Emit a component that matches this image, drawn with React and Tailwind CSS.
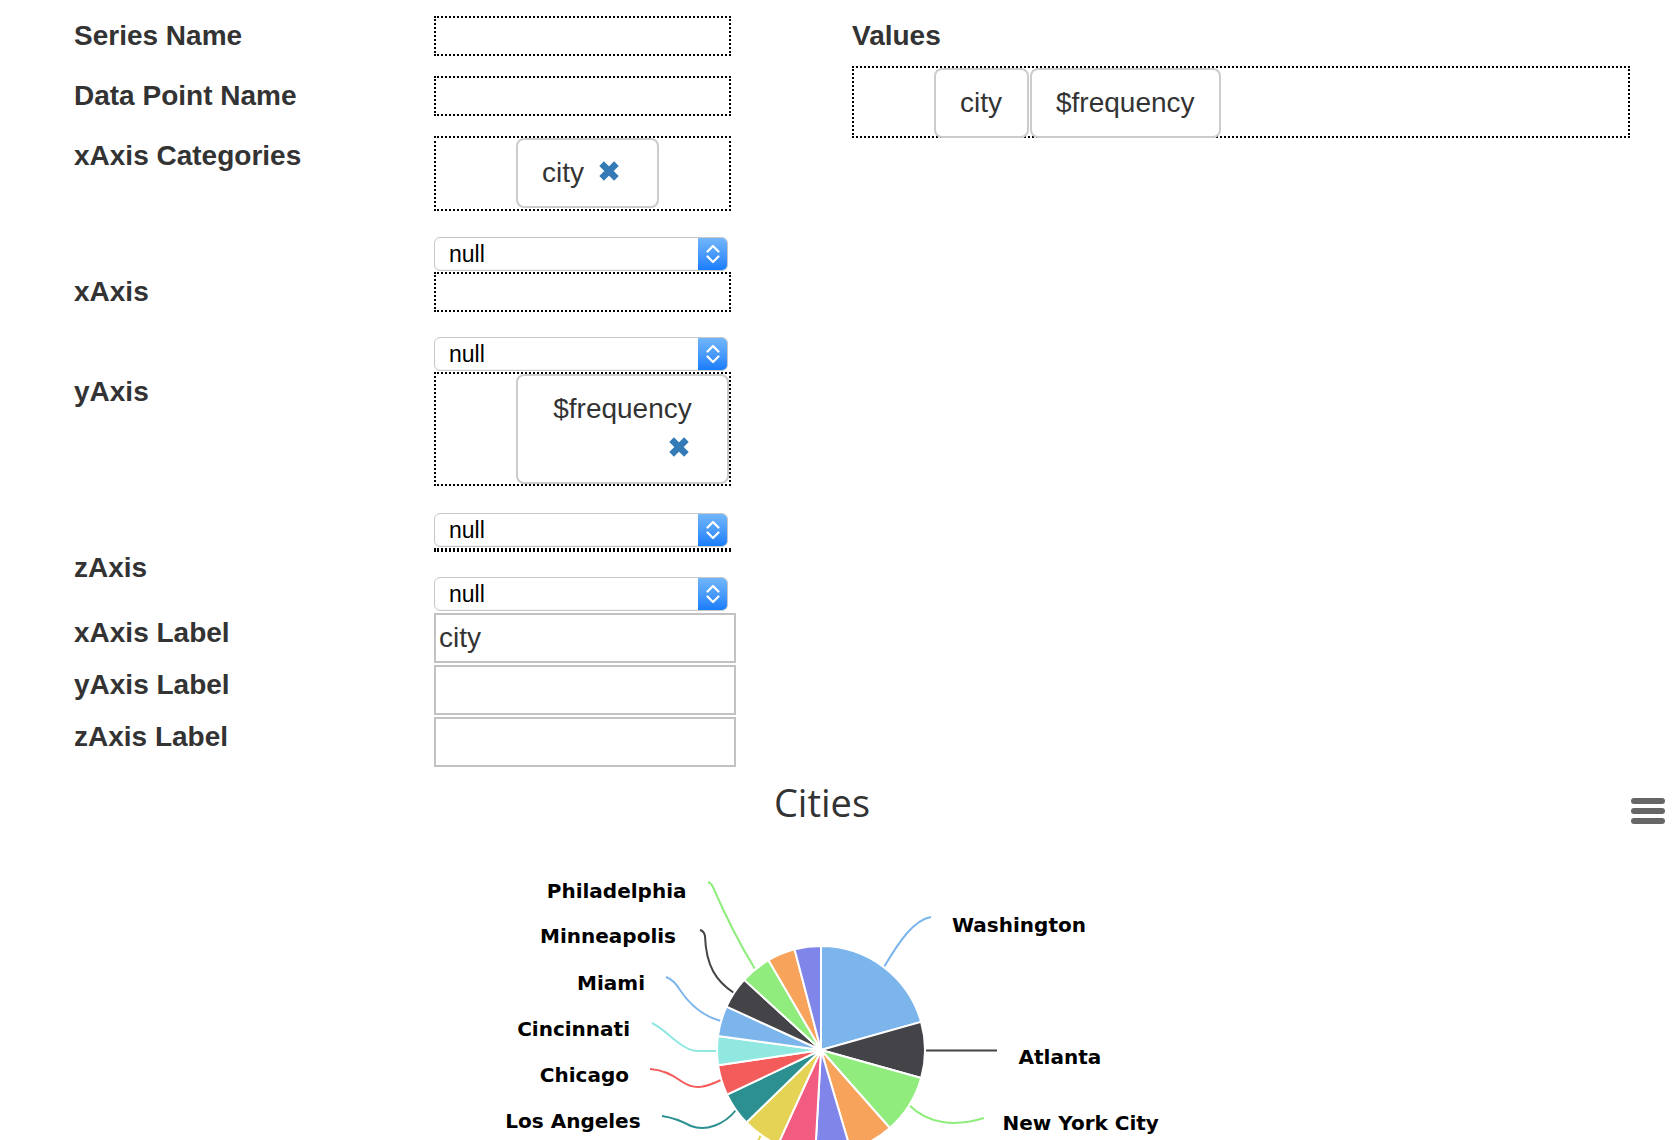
import React from "react";

const LABEL = "w-[360px] shrink-0 text-[28px] leading-[40px] font-bold text-[#333]";
const BOX = "w-[297px] border-2 border-dotted border-black";

function XIcon() {
  return (
    <span className="inline-flex w-[34px] shrink-0 items-center">
      <svg width="22" height="22" viewBox="0 0 22 22" className="-mt-[5px] -ml-[1px]">
        <path d="M3.6 3.6 L18.4 18.4 M18.4 3.6 L3.6 18.4" stroke="#337ab7" strokeWidth="6.5" />
      </svg>
    </span>
  );
}

function Select() {
  return (
    <div className="flex h-[34px] w-[294px] overflow-hidden rounded-[6px] border border-[#c8c8c8] bg-white shadow-[inset_0_-1px_1px_rgba(0,0,0,0.06)]">
      <div className="flex-1 pl-[14px] text-[23px] leading-[32px] text-black">null</div>
      <div className="flex w-[29px] items-center justify-center bg-linear-to-b from-[#72b6fb] to-[#177dfa]">
        <svg width="14" height="20" viewBox="0 0 14 20" fill="none" stroke="white" strokeWidth="2.2" strokeLinecap="round" strokeLinejoin="round">
          <path d="M1.5 7.5 L7 2 L12.5 7.5" />
          <path d="M1.5 12.5 L7 18 L12.5 12.5" />
        </svg>
      </div>
    </div>
  );
}

function Chip({ children, className = "" }) {
  return (
    <div className={"flex h-[70px] items-center rounded-[8px] border-2 border-[#ccc] bg-white px-[24px] text-[28px] leading-[40px] text-[#333] " + className}>
      {children}
    </div>
  );
}

function Row({ label, pt = "pt-0", className = "", children }) {
  return (
    <div className={"flex " + className}>
      <div className={LABEL + " " + pt}>{label}</div>
      <div className="flex flex-col">{children}</div>
    </div>
  );
}

function TextInput({ value }) {
  return (
    <div className="h-[50px] w-[302px] border-2 border-[#c2c2c2] pl-[3px] text-[28px] leading-[46px] text-[#333]">
      {value}
    </div>
  );
}

const cx = 821;
const cy = 1050;
const R = 104;

const SLICES = [
  [0, 74.3, "#7cb5ec"],
  [74.3, 105.6, "#434348"],
  [105.6, 138.6, "#90ed7d"],
  [138.6, 163.5, "#f7a35c"],
  [163.5, 183.2, "#8085e9"],
  [183.2, 204.5, "#f15c80"],
  [204.5, 225.8, "#e4d354"],
  [225.8, 244.6, "#2b908f"],
  [244.6, 261.6, "#f45b5b"],
  [261.6, 277.8, "#91e8e1"],
  [277.8, 294.7, "#7cb5ec"],
  [294.7, 312.4, "#434348"],
  [312.4, 329.7, "#90ed7d"],
  [329.7, 345.3, "#f7a35c"],
  [345.3, 360, "#8085e9"],
];

function pt(a, r) {
  const t = (a * Math.PI) / 180;
  return [cx + r * Math.sin(t), cy - r * Math.cos(t)];
}

function slicePath(a1, a2) {
  const p1 = pt(a1, R);
  const p2 = pt(a2, R);
  const large = a2 - a1 > 180 ? 1 : 0;
  return `M ${cx} ${cy} L ${p1[0].toFixed(2)} ${p1[1].toFixed(2)} A ${R} ${R} 0 ${large} 1 ${p2[0].toFixed(2)} ${p2[1].toFixed(2)} Z`;
}

const CONNECTORS = [
  ["M 884 967 C 900 940, 914 920, 931 917", "#7cb5ec"],
  ["M 925 1050.5 L 997 1050.5", "#434348"],
  ["M 909 1105 C 928 1124, 955 1127, 984 1118", "#90ed7d"],
  ["M 755 969 C 736 938, 722 908, 713 887 Q 711 883 708 882", "#90ed7d"],
  ["M 734 993 C 716 981, 706 966, 705 936 Q 704 931 700 930", "#434348"],
  ["M 721 1021 C 702 1016, 690 1005, 680 990 Q 674 980 666 977", "#7cb5ec"],
  ["M 717 1051 L 697 1051 C 681 1050, 668 1031, 652 1023", "#91e8e1"],
  ["M 721 1080 C 706 1087, 695 1091, 681 1081 Q 666 1070 650 1069", "#f45b5b"],
  ["M 736 1110 C 725 1124, 706 1132, 691 1126 Q 676 1118 662 1116", "#2b908f"],
  ["M 761 1135 L 757 1143", "#e4d354"],
];

const LABELS = [
  ["Washington", 952, 931.7, "start"],
  ["Atlanta", 1018.5, 1064, "start"],
  ["New York City", 1002.5, 1130, "start"],
  ["Philadelphia", 686.5, 897.5, "end"],
  ["Minneapolis", 676, 943.3, "end"],
  ["Miami", 645, 990, "end"],
  ["Cincinnati", 630, 1035.7, "end"],
  ["Chicago", 629, 1081.7, "end"],
  ["Los Angeles", 640.6, 1127.7, "end"],
];

function Chart() {
  return (
    <svg width="1674" height="373" className="block">
      <g transform="translate(0,-767)">
        <text x="822" y="817" textAnchor="middle" fill="#333333" fontSize="38" fontFamily="'Open Sans', 'DejaVu Sans', sans-serif">
          Cities
        </text>
        <rect x="1631" y="798" width="34" height="6" rx="3" fill="#666666" />
        <rect x="1631" y="808" width="34" height="6" rx="3" fill="#666666" />
        <rect x="1631" y="818" width="34" height="6" rx="3" fill="#666666" />
        {CONNECTORS.map(([d, c], i) => (
          <path key={i} d={d} fill="none" stroke={c} strokeWidth="2" />
        ))}
        {SLICES.map(([a1, a2, c], i) => (
          <path key={i} d={slicePath(a1, a2)} fill={c} stroke="#ffffff" strokeWidth="2" strokeLinejoin="round" />
        ))}
        {LABELS.map(([t, x, y, anchor]) => (
          <text key={t} x={x} y={y} textAnchor={anchor} fill="#000000" fontSize="20" fontWeight="bold" fontFamily="'DejaVu Sans', Verdana, sans-serif">
            {t}
          </text>
        ))}
      </g>
    </svg>
  );
}

export default function App() {
  return (
    <div className="relative h-[1140px] w-[1674px] overflow-hidden bg-white font-['Liberation_Sans',Arial,Helvetica,sans-serif]">
      <div className="flex pt-[16px]">
        <div className="flex w-[852px] shrink-0 flex-col pl-[74px]">
          <Row label="Series Name">
            <div className={BOX + " h-[40px]"} />
          </Row>
          <Row label="Data Point Name" className="mt-[20px]">
            <div className={BOX + " h-[40px]"} />
          </Row>
          <Row label="xAxis Categories" className="mt-[20px]">
            <div className={BOX + " h-[75px] pl-[80px]"}>
              <Chip className="w-[143px]">
                <span>city</span>
                <span className="ml-[15px] flex">
                  <XIcon />
                </span>
              </Chip>
            </div>
          </Row>
          <Row label="xAxis" pt="pt-[35px]" className="mt-[26px]">
            <Select />
            <div className={BOX + " mt-[1px] h-[40px]"} />
          </Row>
          <Row label="yAxis" pt="pt-[35px]" className="mt-[25px]">
            <Select />
            <div className={BOX + " mt-[1px] h-[114px] pl-[80px]"}>
              <div className="flex h-[110px] w-[213px] flex-col rounded-[8px] border-2 border-[#ccc] bg-white px-[24px] py-[13px] text-[28px] leading-[40px] text-[#333]">
                <div className="text-center">$frequency</div>
                <div className="flex h-[40px] items-center justify-end">
                  <XIcon />
                </div>
              </div>
            </div>
          </Row>
          <Row label="zAxis" pt="h-[39px] pt-[35px]" className="mt-[27px]">
            <Select />
            <div className={BOX + " mt-[1px] h-[4px]"} />
          </Row>
          <Row label="xAxis Label" pt="pt-[36px]" className="mt-[25px]">
            <Select />
            <div className="mt-[2px]">
              <TextInput value="city" />
            </div>
          </Row>
          <Row label="yAxis Label" className="mt-[2px]">
            <TextInput value="" />
          </Row>
          <Row label="zAxis Label" className="mt-[2px]">
            <TextInput value="" />
          </Row>
        </div>
        <div className="flex-1 pr-[44px]">
          <div className="text-[28px] leading-[40px] font-bold text-[#333]">Values</div>
          <div className="mt-[10px] flex h-[72px] gap-[1px] border-2 border-dotted border-black pl-[80px]">
            <Chip className="h-[68px] w-[95px]">city</Chip>
            <Chip className="h-[68px] w-[191px]">$frequency</Chip>
          </div>
        </div>
      </div>
      <Chart />
    </div>
  );
}
